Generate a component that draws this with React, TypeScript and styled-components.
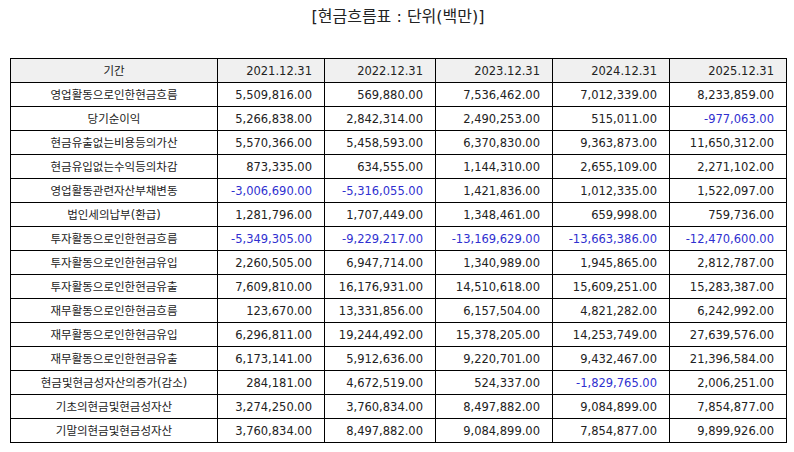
import React from "react";
import styled, { createGlobalStyle } from "styled-components";

const GlobalStyle = createGlobalStyle`
  html, body { margin: 0; padding: 0; background: #ffffff; }
  body { font-family: "DejaVu Sans", "Noto Sans CJK KR", sans-serif; color: #222; }
`;

const Page = styled.div`
  width: 794px;
  height: 452px;
  box-sizing: border-box;
  padding: 7px 0 0 10px;
  display: flex;
  flex-direction: column;
`;

const Title = styled.h1`
  margin: 0 0 31px 0;
  width: 776px;
  text-align: center;
  font-size: 16px;
  line-height: 20px;
  font-weight: normal;
  color: #222;
  font-family: "DejaVu Sans", "Noto Sans CJK KR", sans-serif;
`;

const Table = styled.table`
  width: 776px;
  table-layout: fixed;
  border-collapse: collapse;
  border: 1px solid #000;
  font-size: 11.5px;
`;

const Row = styled.tr<{ $head?: boolean }>`
  height: 24px;
  background: ${(p) => (p.$head ? "#f0f0f0" : "#ffffff")};
`;

const Cell = styled.td<{ $align?: "left" | "center" | "right"; $neg?: boolean }>`
  border: 1px solid #000;
  padding: 0 12px 0 6px;
  font-weight: normal;
  text-align: ${(p) => p.$align ?? "right"};
  color: ${(p) => (p.$neg ? "#3030d0" : "#222")};
  white-space: nowrap;
  line-height: 22px;
  vertical-align: middle;
  overflow: hidden;
`;

const LabelCell = styled(Cell)`
  padding: 0 6px;
`;

const widths = [207, 107, 111, 117, 117, 117];

const years = ["2021.12.31", "2022.12.31", "2023.12.31", "2024.12.31", "2025.12.31"];

const rows: [string, string[]][] = [
  ["영업활동으로인한현금흐름", ["5,509,816.00", "569,880.00", "7,536,462.00", "7,012,339.00", "8,233,859.00"]],
  ["당기순이익", ["5,266,838.00", "2,842,314.00", "2,490,253.00", "515,011.00", "-977,063.00"]],
  ["현금유출없는비용등의가산", ["5,570,366.00", "5,458,593.00", "6,370,830.00", "9,363,873.00", "11,650,312.00"]],
  ["현금유입없는수익등의차감", ["873,335.00", "634,555.00", "1,144,310.00", "2,655,109.00", "2,271,102.00"]],
  ["영업활동관련자산부채변동", ["-3,006,690.00", "-5,316,055.00", "1,421,836.00", "1,012,335.00", "1,522,097.00"]],
  ["법인세의납부(환급)", ["1,281,796.00", "1,707,449.00", "1,348,461.00", "659,998.00", "759,736.00"]],
  ["투자활동으로인한현금흐름", ["-5,349,305.00", "-9,229,217.00", "-13,169,629.00", "-13,663,386.00", "-12,470,600.00"]],
  ["투자활동으로인한현금유입", ["2,260,505.00", "6,947,714.00", "1,340,989.00", "1,945,865.00", "2,812,787.00"]],
  ["투자활동으로인한현금유출", ["7,609,810.00", "16,176,931.00", "14,510,618.00", "15,609,251.00", "15,283,387.00"]],
  ["재무활동으로인한현금흐름", ["123,670.00", "13,331,856.00", "6,157,504.00", "4,821,282.00", "6,242,992.00"]],
  ["재무활동으로인한현금유입", ["6,296,811.00", "19,244,492.00", "15,378,205.00", "14,253,749.00", "27,639,576.00"]],
  ["재무활동으로인한현금유출", ["6,173,141.00", "5,912,636.00", "9,220,701.00", "9,432,467.00", "21,396,584.00"]],
  ["현금및현금성자산의증가(감소)", ["284,181.00", "4,672,519.00", "524,337.00", "-1,829,765.00", "2,006,251.00"]],
  ["기초의현금및현금성자산", ["3,274,250.00", "3,760,834.00", "8,497,882.00", "9,084,899.00", "7,854,877.00"]],
  ["기말의현금및현금성자산", ["3,760,834.00", "8,497,882.00", "9,084,899.00", "7,854,877.00", "9,899,926.00"]],
];

export default function App() {
  return (
    <>
      <GlobalStyle />
      <Page>
        <Title>[현금흐름표 : 단위(백만)]</Title>
        <Table>
          <colgroup>
            {widths.map((w, i) => (
              <col key={i} style={{ width: w }} />
            ))}
          </colgroup>
          <thead>
            <Row $head>
              <LabelCell as="th" $align="center">기간</LabelCell>
              {years.map((y) => (
                <Cell as="th" key={y}>
                  {y}
                </Cell>
              ))}
            </Row>
          </thead>
          <tbody>
            {rows.map(([label, vals]) => (
              <Row key={label}>
                <LabelCell $align="center">{label}</LabelCell>
                {vals.map((v, i) => (
                  <Cell key={i} $neg={v.startsWith("-")}>
                    {v}
                  </Cell>
                ))}
              </Row>
            ))}
          </tbody>
        </Table>
      </Page>
    </>
  );
}
